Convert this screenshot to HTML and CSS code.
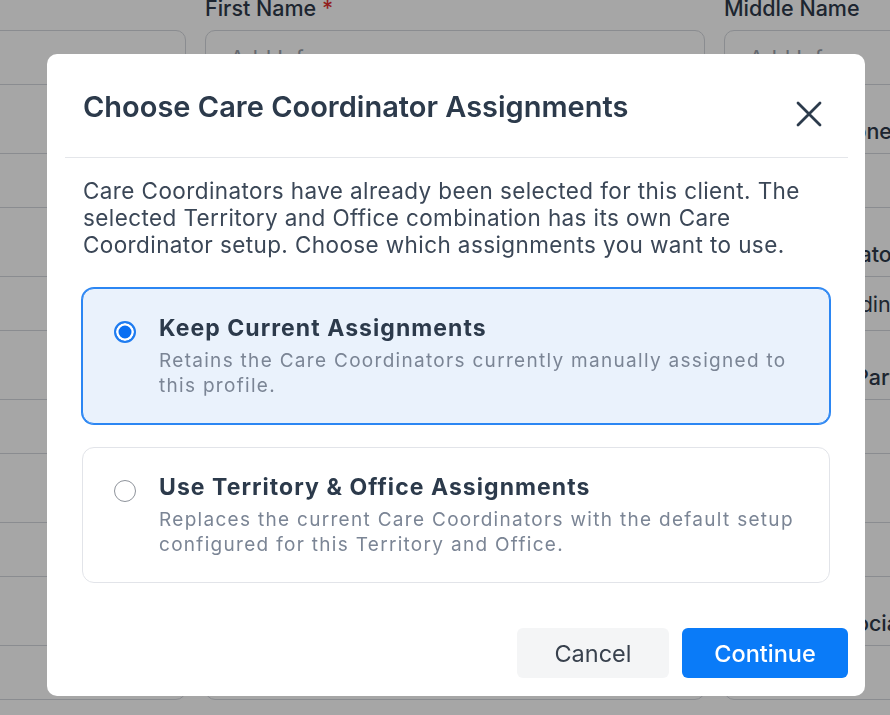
FILE: index.html
```html
<!DOCTYPE html>
<html lang="en">
<head>
<meta charset="utf-8">
<title>Choose Care Coordinator Assignments</title>
<link rel="stylesheet" href="styles.css">
</head>
<body>
<div class="page">
  <div class="form">
    <div class="field"><div class="lbl"></div><div class="input"></div></div>
    <div class="field"><div class="lbl">First Name <span class="req">*</span></div><div class="input"><span class="ph">Add Info</span></div></div>
    <div class="field"><div class="lbl">Middle Name</div><div class="input"><span class="ph">Add Info</span></div></div>

    <div class="field"><div class="lbl"></div><div class="input"></div></div>
    <div class="field"><div class="lbl">Date of Birth</div><div class="input"></div></div>
    <div class="field"><div class="lbl">Preferred Phones</div><div class="input"></div></div>

    <div class="field"><div class="lbl"></div><div class="input"></div></div>
    <div class="field"><div class="lbl">Office</div><div class="input"></div></div>
    <div class="field"><div class="lbl">Care Coordinators</div><div class="input"><span class="val">Select Coordinators</span></div></div>

    <div class="field"><div class="lbl"></div><div class="input"></div></div>
    <div class="field"><div class="lbl">Language</div><div class="input"></div></div>
    <div class="field"><div class="lbl">Responsible Party</div><div class="input"></div></div>

    <div class="field"><div class="lbl"></div><div class="input"></div></div>
    <div class="field"><div class="lbl">Email</div><div class="input"></div></div>
    <div class="field"><div class="lbl">Status</div><div class="input"></div></div>

    <div class="field"><div class="lbl"></div><div class="input"></div></div>
    <div class="field"><div class="lbl">City</div><div class="input"></div></div>
    <div class="field"><div class="lbl">Subscriber Social Security Number</div><div class="input"></div></div>
  </div>
</div>

<div class="overlay">
  <div class="modal" role="dialog" aria-labelledby="modal-title">
    <div class="modal-head">
      <h2 class="modal-title" id="modal-title">Choose Care Coordinator Assignments</h2>
      <button class="close" aria-label="Close">
        <svg width="28" height="28" viewBox="0 0 28 28" fill="none" stroke="#2c3b4c" stroke-width="2.8" stroke-linecap="round">
          <path d="M3 3 L25 25 M25 3 L3 25"/>
        </svg>
      </button>
    </div>
    <div class="divider"></div>
    <div class="modal-body">
      <p class="intro">Care Coordinators have already been selected for this client. The selected Territory and Office combination has its own Care Coordinator setup. Choose which assignments you want to use.</p>

      <div class="option option-selected">
        <span class="radio radio-on"></span>
        <div class="option-text">
          <div class="option-title">Keep Current Assignments</div>
          <div class="option-desc">Retains the Care Coordinators currently manually assigned to this profile.</div>
        </div>
      </div>

      <div class="option">
        <span class="radio"></span>
        <div class="option-text">
          <div class="option-title">Use Territory &amp; Office Assignments</div>
          <div class="option-desc">Replaces the current Care Coordinators with the default setup configured for this Territory and Office.</div>
        </div>
      </div>
    </div>
    <div class="modal-foot">
      <button class="btn btn-cancel">Cancel</button>
      <button class="btn btn-primary">Continue</button>
    </div>
  </div>
</div>
</body>
</html>
```

FILE: styles.css
```css
html, body {
  margin: 0;
  padding: 0;
  width: 890px;
  height: 715px;
  overflow: hidden;
  background: #ffffff;
  font-family: Inter, "Noto Sans", sans-serif;
}

/* Background form */
.page {
  margin-left: -20px;
  margin-top: -4px;
}

.form {
  display: grid;
  grid-template-columns: 206px 500px 500px;
  column-gap: 19px;
  row-gap: 34px;
  width: 1300px;
}

.lbl {
  height: 24px;
  line-height: 24px;
  font-size: 21.5px;
  font-weight: 500;
  color: #2e3a4a;
  margin-bottom: 10px;
  white-space: nowrap;
}

.req {
  color: #e0312f;
}

.input {
  box-sizing: border-box;
  height: 55px;
  border: 1px solid #d4d7dd;
  border-radius: 10px;
  background: #ffffff;
  padding: 0 24px;
  display: flex;
  align-items: center;
  font-size: 21.5px;
  white-space: nowrap;
}

.ph {
  color: #9aa1ab;
}

.val {
  color: #2e3a4a;
  margin-left: -8px;
}

/* Overlay + modal */
.overlay {
  position: fixed;
  inset: 0;
  background: rgba(0, 0, 0, 0.35);
  padding: 54px 0 0 47px;
}

.modal {
  width: 818px;
  background: #ffffff;
  border-radius: 10px;
  overflow: hidden;
}

.modal-head {
  display: flex;
  justify-content: space-between;
  align-items: flex-start;
  padding: 36px 42px 33px 36px;
}

.modal-title {
  margin: 0;
  font-size: 29px;
  line-height: 34px;
  font-weight: 600;
  color: #2c3a4b;
}

.close {
  border: 0;
  background: none;
  padding: 0;
  margin: 10px 0 -4px;
  width: 28px;
  height: 28px;
  cursor: pointer;
}

.close svg {
  display: block;
}

.divider {
  height: 1px;
  background: #e4e6ea;
  margin: 0 17px 0 18px;
}

.modal-body {
  padding: 19px 35px 0 35px;
}

.intro {
  margin: 0 0 30px 1px;
  font-size: 22.5px;
  line-height: 27px;
  letter-spacing: 0.4px;
  color: #3b4757;
}

.option {
  display: flex;
  align-items: flex-start;
  gap: 23px;
  border: 1px solid #e2e4e9;
  border-radius: 12px;
  padding: 24px 24px 25px 31px;
  background: #ffffff;
}

.option + .option {
  margin-top: 23px;
}

.option-selected {
  border-color: #2b86f3;
  box-shadow: 0 0 0 1px #2b86f3;
  background: #eaf2fc;
}

.radio {
  flex: none;
  box-sizing: border-box;
  width: 22px;
  height: 22px;
  margin-top: 8px;
  border-radius: 50%;
  border: 1.5px solid #8e939b;
  background: #ffffff;
}

.radio-on {
  border: 2px solid #1f7cf0;
  background: #0a6ff2;
  box-shadow: inset 0 0 0 2.5px #ffffff;
}

.option-title {
  font-size: 23px;
  line-height: 30px;
  font-weight: 700;
  letter-spacing: 1.05px;
  color: #2c3a4b;
}

.option-desc {
  margin-top: 5px;
  font-size: 19px;
  line-height: 25px;
  letter-spacing: 1.3px;
  color: #7b8595;
}

.modal-foot {
  display: flex;
  justify-content: flex-end;
  gap: 13px;
  padding: 45px 17px 18px;
}

.btn {
  height: 50px;
  border: 0;
  border-radius: 6px;
  font-family: Inter, "Noto Sans", sans-serif;
  font-size: 23.5px;
  cursor: pointer;
}

.btn-cancel {
  width: 152px;
  background: #f4f5f6;
  color: #38414d;
  font-weight: 400;
}

.btn-primary {
  width: 166px;
  background: #0a7bf8;
  color: #ffffff;
  font-weight: 500;
}
```
